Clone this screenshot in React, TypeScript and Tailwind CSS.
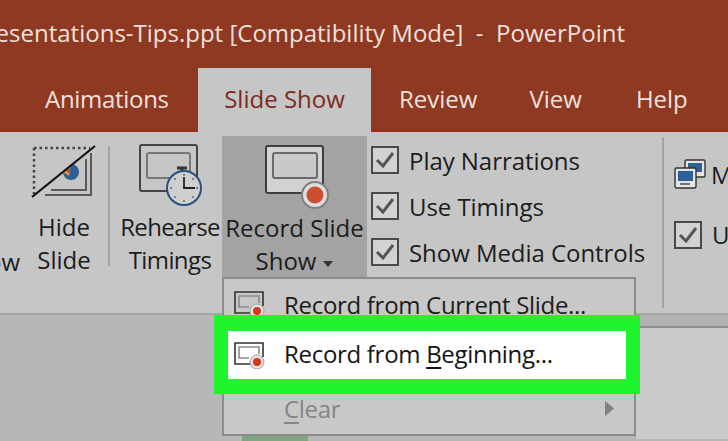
const font = "font-['Open_Sans','Noto_Sans',sans-serif]"

function Check() {
  return (
    <span className="flex h-[28px] w-[28px] shrink-0 items-center justify-center border-2 border-[#4a4a4a] bg-[#d2d2d2]">
      <svg width="20" height="18" viewBox="0 0 20 18" fill="none">
        <path d="M2 9l6 6L18 2" stroke="#555" strokeWidth="3" />
      </svg>
    </span>
  )
}

function CheckRow({ label }: { label: string }) {
  return (
    <div className="flex h-[46px] items-center gap-[10px]">
      <Check />
      <span className="text-[24px] tracking-[-0.05px] text-[#1c1c1c]">{label}</span>
    </div>
  )
}

function RecordIcon({ large }: { large?: boolean }) {
  if (large) {
    return (
      <svg width="66" height="66" viewBox="0 0 66 66" fill="none">
        <rect x="1" y="1" width="57" height="47" rx="2" fill="#d2d2d2" stroke="#3e3e3e" strokeWidth="2" />
        <rect x="8" y="8" width="44" height="25" rx="2" fill="#c8c8c8" stroke="#6a6a6a" strokeWidth="2" />
        <circle cx="50" cy="50" r="13" fill="#dedede" stroke="#808080" strokeWidth="2" />
        <circle cx="50" cy="50" r="8.5" fill="#cb4f2f" />
      </svg>
    )
  }
  return (
    <svg width="34" height="28" viewBox="0 0 34 28" fill="none">
      <path d="M18 23H2V2h28v14" stroke="#333" strokeWidth="1.6" />
      <path d="M16 17H6V6h20v7" stroke="#8a8a8a" strokeWidth="1.6" />
      <circle cx="24" cy="21" r="7" fill="#e4e4e4" stroke="#a0a0a0" />
      <circle cx="24" cy="21" r="4" fill="#d5391d" />
    </svg>
  )
}

export default function App() {
  return (
    <div className={`relative h-[441px] w-[728px] overflow-hidden bg-[#b7b7b7] ${font}`}>
      {/* title + tabs */}
      <header className="h-[132px] border-b-2 border-[#9a2f18] bg-[#8f3822]">
        <div className="flex h-[68px] items-center justify-end whitespace-pre pr-[103px] pb-[2px] text-[24px] text-[#efe1dc]">
          Presentations-Tips.ppt [Compatibility Mode]  -  PowerPoint
        </div>
        <nav className="flex h-[64px] text-[24px] text-[#f0e2dd]">
          <a className="ml-[45px] flex w-[123px] items-center whitespace-nowrap pb-[2px] tracking-[-0.3px]">Animations</a>
          <a className="ml-[30px] flex h-[64px] w-[173px] items-center justify-center bg-[#c6c6c6] pb-[2px] text-[#7b2b1d]">Slide Show</a>
          <a className="ml-[28px] flex items-center pb-[2px]">Review</a>
          <a className="ml-[52px] flex items-center pb-[2px]">View</a>
          <a className="ml-[54px] flex items-center pb-[2px]">Help</a>
        </nav>
      </header>

      {/* ribbon */}
      <div className="flex h-[183px] border-b-2 border-[#a5a5a5] bg-[#c6c6c6] text-[24px] leading-[33px] text-[#1c1c1c]">
        <div className="flex w-[20px] shrink-0 justify-end whitespace-nowrap pt-[113px]">Show</div>
        <div className="flex w-[88px] shrink-0 flex-col items-center pt-[13px]">
          <svg width="66" height="54" viewBox="0 0 66 54" fill="none">
            <path d="M60 8v42H14M55 14v31H20" stroke="#5a5a5a" strokeWidth="2" />
            <circle cx="40" cy="27" r="8" fill="#2f5f95" />
            <path d="M40 19l-8 8 6 4z" fill="#d2a24e" />
            <path d="M39 23l-4 3 3 2z" fill="#b03a2a" />
            <path d="M0 52L64 0H0z" fill="#c6c6c6" />
            <path d="M3 3h56M3 3v46" stroke="#444" strokeWidth="2.5" strokeDasharray="2.5 3" />
            <path d="M1 52L64 1" stroke="#111" strokeWidth="2.2" />
          </svg>
          <div className="mt-[11px] text-center">Hide<br />Slide</div>
        </div>
        <div className="mt-[14px] h-[120px] w-[2px] shrink-0 bg-[#a4a4a4]" />
        <div className="flex w-[112px] shrink-0 flex-col items-center pt-[12px] pl-[8px]">
          <svg width="66" height="68" viewBox="0 0 66 68" fill="none" className="-mb-[10px] ml-[3px]">
            <rect x="1" y="1" width="57" height="46" rx="2" stroke="#444" strokeWidth="2" />
            <rect x="8" y="9" width="43" height="25" rx="2" stroke="#777" strokeWidth="2" />
            <path d="M38 24h10M43 24v4" stroke="#333" strokeWidth="3" />
            <circle cx="45" cy="44" r="17" fill="#cfcfcf" stroke="#27517f" strokeWidth="2" />
            <path d="M45 33v11h11" stroke="#222" strokeWidth="1.8" />
            <path d="M45 31v.1M45 57v.1M32 44h.1M58 44h.1M36 35v.1M54 35v.1M36 53v.1M54 53v.1" stroke="#666" strokeWidth="2" strokeLinecap="round" />
          </svg>
          <div className="mt-[8px] whitespace-nowrap text-center tracking-[-0.6px]">Rehearse<br />Timings</div>
        </div>
        <div className="mt-[4px] h-[141px] w-[145px] shrink-0 bg-[#a3a3a3] pt-[9px]">
          <div className="flex flex-col items-center">
            <div className="ml-[6px]"><RecordIcon large /></div>
            <div className="whitespace-nowrap text-center">
              Record Slide<br />Show
              <svg width="10" height="6" viewBox="0 0 10 6" className="ml-[7px] inline-block align-middle"><path d="M0 0h10L5 6z" fill="#333" /></svg>
            </div>
          </div>
        </div>
        <div className="ml-[4px] w-[291px] shrink-0 pt-[5px]">
          <CheckRow label="Play Narrations" />
          <CheckRow label="Use Timings" />
          <CheckRow label="Show Media Controls" />
        </div>
        <div className="mt-[5px] h-[171px] w-[2px] shrink-0 bg-[#a4a4a4]" />
        <div className="ml-[10px] pt-[22px]">
          <div className="flex h-[40px] items-center gap-[4px]">
            <svg width="33" height="30" viewBox="0 0 33 30" fill="none">
              <rect x="11" y="1" width="20" height="17" rx="1.5" fill="#e4e4e4" stroke="#333" strokeWidth="1.4" />
              <rect x="14" y="4" width="14" height="9" fill="#2f6196" />
              <rect x="1" y="9" width="21" height="20" rx="1.5" fill="#e4e4e4" stroke="#333" strokeWidth="1.4" />
              <rect x="4" y="12" width="15" height="10" fill="#2f6196" />
              <path d="M6 25h10" stroke="#444" strokeWidth="1.4" />
            </svg>
            <span>M</span>
          </div>
          <div className="mt-[24px] flex items-center gap-[10px]">
            <Check />
            <span>U</span>
          </div>
        </div>
      </div>

      {/* area under the ribbon */}
      <div className="flex h-[124px]">
        <div className="w-[636px] shrink-0" />
        <div className="flex-1 bg-[#cbcbcb]">
          <div className="h-[13px] border-b-2 border-[#8f8f8f] bg-[#b2b2b2]" />
        </div>
      </div>

      {/* dropdown */}
      <div className="absolute top-[277px] left-[222px] flex h-[159px] w-[414px] flex-col border-2 border-[#8c8c8c] bg-[#c8c8c8] text-[24px] tracking-[-0.3px]">
        <div className="flex h-[51px] shrink-0 items-start pt-[11px] pl-[9px] text-[#1c1c1c]">
          <RecordIcon />
          <span className="ml-[17px] -mt-[3px] whitespace-nowrap">Record from Current Slide...</span>
        </div>
        <div className="relative z-10 -mt-[15px] -mr-[6px] -ml-[10px] flex h-[79px] shrink-0 items-center border-x-[14px] border-t-[16px] border-b-[15px] border-[#1ef52e] bg-white pl-[5px] text-[#141414]">
          <RecordIcon />
          <span className="ml-[17px] -mt-[2px] whitespace-nowrap">Record from <span className="underline underline-offset-4">B</span>eginning...</span>
        </div>
        <div className="-mt-[15px] flex flex-1 items-center justify-between pt-[4px] pr-[20px] pl-[60px] text-[#858585]">
          <span><span className="underline underline-offset-4">C</span>lear</span>
          <svg width="9" height="15" viewBox="0 0 9 15"><path d="M0 0l9 7.5L0 15z" fill="#808080" /></svg>
        </div>
      </div>
      <div className="absolute top-[436px] left-[242px] h-[5px] w-[66px] bg-[#7fa67f]" />
    </div>
  )
}
